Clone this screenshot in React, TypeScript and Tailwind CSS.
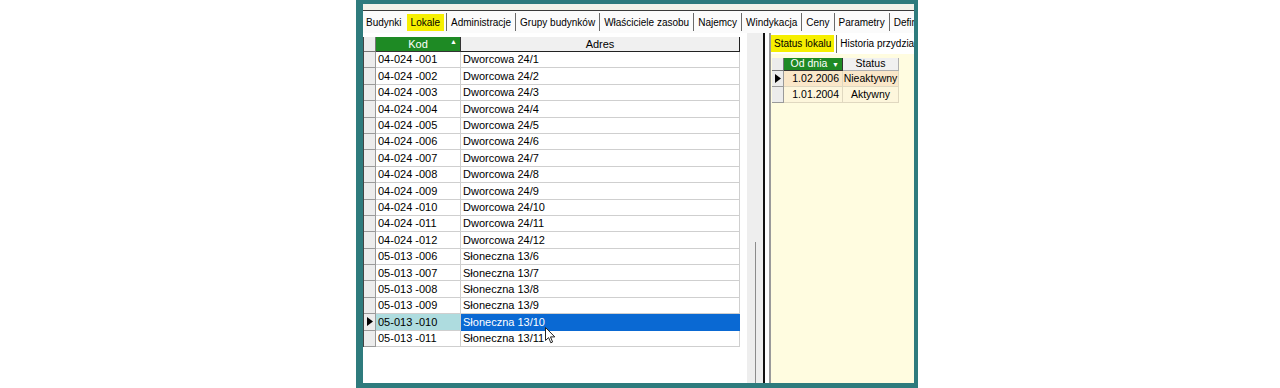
const rows: [string, string][] = [
  ["04-024 -001", "Dworcowa 24/1"],
  ["04-024 -002", "Dworcowa 24/2"],
  ["04-024 -003", "Dworcowa 24/3"],
  ["04-024 -004", "Dworcowa 24/4"],
  ["04-024 -005", "Dworcowa 24/5"],
  ["04-024 -006", "Dworcowa 24/6"],
  ["04-024 -007", "Dworcowa 24/7"],
  ["04-024 -008", "Dworcowa 24/8"],
  ["04-024 -009", "Dworcowa 24/9"],
  ["04-024 -010", "Dworcowa 24/10"],
  ["04-024 -011", "Dworcowa 24/11"],
  ["04-024 -012", "Dworcowa 24/12"],
  ["05-013 -006", "Słoneczna 13/6"],
  ["05-013 -007", "Słoneczna 13/7"],
  ["05-013 -008", "Słoneczna 13/8"],
  ["05-013 -009", "Słoneczna 13/9"],
  ["05-013 -010", "Słoneczna 13/10"],
  ["05-013 -011", "Słoneczna 13/11"],
];

const tabs = [
  "Administracje",
  "Grupy budynków",
  "Właściciele zasobu",
  "Najemcy",
  "Windykacja",
  "Ceny",
  "Parametry",
  "Definicje",
];

const Sep = () => <div className="w-px h-[18px] bg-[#6a6a6a] mx-[2px] shrink-0" />;

const RowMarker = () => (
  <svg width="6" height="9" viewBox="0 0 6 9" className="block">
    <polygon points="0,0 6,4.5 0,9" fill="#000" />
  </svg>
);

const Cursor = () => (
  <svg width="11" height="17" viewBox="0 0 11 17">
    <path
      d="M0.5 0.5 L0.5 13.5 L3.6 10.6 L5.8 15.8 L7.6 15 L5.5 9.9 L9.8 9.9 Z"
      fill="#fff"
      stroke="#222"
      strokeWidth="1"
      strokeLinejoin="round"
    />
  </svg>
);

export default function App() {
  const selected = 16;

  return (
    <div className="w-full h-[388px] bg-white flex font-['Liberation_Sans',Arial,sans-serif] text-black">
      <div className="w-[356px] shrink-0" />
      <div className="w-[562px] h-[388px] shrink-0 bg-[#2e7b7d] pl-[7px] pr-[4px] pt-[4px] pb-[5px]">
        <div className="h-full bg-white flex flex-col overflow-hidden">
          {/* top strip */}
          <div className="h-[6px] shrink-0 bg-[#f3f3ea] border-b border-[#3a3a3a] box-content" />

          {/* main tab bar */}
          <div className="h-[22px] shrink-0 flex items-center pl-[1px] text-[10px] whitespace-nowrap overflow-hidden bg-[#fbfbfb]">
            <span className="px-[2px]">Budynki</span>
            <span className="bg-[#f6ef00] h-[17px] flex items-center px-[4px] ml-[3px]">Lokale</span>
            {tabs.map((t) => (
              <div key={t} className="flex items-center">
                <Sep />
                <span className="px-[2px]">{t}</span>
              </div>
            ))}
          </div>

          {/* panels */}
          <div className="flex-1 flex min-h-0">
            {/* left panel */}
            <div className="w-[400px] shrink-0 flex">
              <div className="w-[377px] shrink-0 pt-[4px] relative text-[11px]">
                {/* header */}
                <div className="flex h-[15px] border-l border-[#444]">
                  <div className="w-[12px] bg-[#ececec] border-r border-b border-[#777]" />
                  <div className="w-[85px] bg-[#1e8a24] text-white border-r border-b border-[#333] flex items-center justify-center relative">
                    Kod
                    <span className="absolute right-[3px] top-[1px] text-[7px] leading-none">▲</span>
                  </div>
                  <div className="w-[279px] bg-[#f0f0f0] border-r border-b border-[#222] flex items-center justify-center">
                    Adres
                  </div>
                </div>
                {/* rows */}
                {rows.map(([kod, adres], i) => {
                  const sel = i === selected;
                  return (
                    <div key={kod} className="flex h-[16.4px] border-l border-[#444]">
                      <div className="w-[12px] bg-[#ececec] border-r border-b border-[#9a9a9a] flex items-center justify-center">
                        {sel && <RowMarker />}
                      </div>
                      <div
                        className={
                          "w-[85px] border-r border-b border-[#cfcfcf] flex items-center pl-[2px] " +
                          (sel ? "bg-[#aedcdf]" : "bg-white")
                        }
                      >
                        {kod}
                      </div>
                      <div
                        className={
                          "w-[279px] border-r border-b flex items-center pl-[2px] " +
                          (sel ? "bg-[#0a69d3] text-white border-[#0a69d3]" : "bg-white border-[#cfcfcf]")
                        }
                      >
                        {adres}
                      </div>
                    </div>
                  );
                })}
                <div className="absolute left-[182px] top-[294px]">
                  <Cursor />
                </div>
              </div>
              <div className="w-[7px] shrink-0" />
              {/* scrollbar */}
              <div className="w-[16px] shrink-0 bg-[#eeeeee] flex justify-center">
                <div className="w-px bg-[#8c8c8c] mt-[209px]" />
              </div>
            </div>

            {/* splitter */}
            <div className="w-[2px] shrink-0 bg-[#111]" />
            <div className="w-[4px] shrink-0 bg-white" />
            <div className="w-[2px] shrink-0 bg-[#9a9a9a]" />

            {/* right panel */}
            <div className="flex-1 min-w-0 flex flex-col">
              <div className="h-[21px] shrink-0 bg-white flex items-start pt-[2px] text-[10px] whitespace-nowrap overflow-hidden">
                <span className="bg-[#f6ef00] h-[17px] flex items-center px-[3px]">Status lokalu</span>
                <Sep />
                <span className="px-[1px] h-[17px] flex items-center">Historia przydziałów</span>
              </div>
              <div className="flex-1 bg-[#fffce0] pt-[4px] pl-[1px] text-[10.5px]">
                <div className="w-[127px]">
                  <div className="flex h-[13px]">
                    <div className="w-[12px] bg-[#ececec] border-r border-b border-[#777]" />
                    <div className="w-[59px] bg-[#1e8a24] text-white border-r border-b border-[#333] flex items-center justify-center relative">
                      <span className="pr-[8px]">Od dnia</span>
                      <span className="absolute right-[3px] top-[3px] text-[7px] leading-none">▼</span>
                    </div>
                    <div className="w-[56px] bg-[#f0f0f0] border-r border-b border-[#b0b0b0] flex items-center justify-center">
                      Status
                    </div>
                  </div>
                  <div className="flex h-[16px]">
                    <div className="w-[12px] bg-[#ececec] border-r border-b border-[#9a9a9a] flex items-center justify-center">
                      <RowMarker />
                    </div>
                    <div className="w-[59px] bg-[#fae7c9] border-r border-b border-[#e0d8c0] flex items-center justify-end pr-[3px]">
                      1.02.2006
                    </div>
                    <div className="w-[56px] bg-[#fae7c9] border-r border-b border-[#e0d8c0] flex items-center justify-center">
                      Nieaktywny
                    </div>
                  </div>
                  <div className="flex h-[16px]">
                    <div className="w-[12px] bg-[#ececec] border-r border-b border-[#9a9a9a]" />
                    <div className="w-[59px] bg-[#fdf6dc] border-r border-b border-[#e0d8c0] flex items-center justify-end pr-[3px]">
                      1.01.2004
                    </div>
                    <div className="w-[56px] bg-[#fdf6dc] border-r border-b border-[#e0d8c0] flex items-center justify-center">
                      Aktywny
                    </div>
                  </div>
                </div>
              </div>
            </div>
          </div>
        </div>
      </div>
    </div>
  );
}
